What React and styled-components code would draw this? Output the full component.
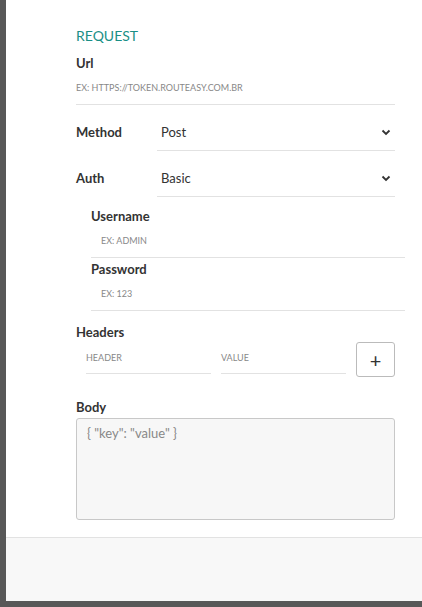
import React from 'react';
import styled, { createGlobalStyle } from 'styled-components';

const Global = createGlobalStyle`
    body { margin: 0; background: #585858; font-family: Lato, "Open Sans", sans-serif; }
`;

const Frame = styled.div`
    width: 416px;
    height: 601px;
    margin-left: 6px;
    background: white;
    display: flex;
    flex-direction: column;
`;

const Body = styled.div`
    flex: 1;
    padding: 27px 27px 0 70px;
    display: flex;
    flex-direction: column;
`;

const Footer = styled.div`
    height: 63px;
    background: #f8f8f8;
    border-top: 1px solid #e2e2e2;
`;

const Heading = styled.div`
    color: #1a8f86;
    font-size: 14px;
    margin-bottom: 11px;
`;

const Label = styled.div`
    font-size: 13px;
    font-weight: bold;
    color: #333;
    width: ${p => p.$w || 'auto'};
    flex-shrink: 0;
`;

const Input = styled.div`
    font-size: 9px;
    color: #888;
    text-transform: uppercase;
    border-bottom: 1px solid #e2e2e2;
    padding: ${p => p.$pad || '0'};
    height: ${p => p.$h || 'auto'};
    display: flex;
    align-items: center;
    flex: ${p => p.$flex || 'none'};
    margin-right: ${p => p.$mr || '0'};
`;

const Row = styled.div`
    display: flex;
    align-items: center;
    margin-top: ${p => p.$mt || '0'};
`;

const Select = styled.div`
    flex: 1;
    height: 37px;
    border-bottom: 1px solid #e2e2e2;
    display: flex;
    align-items: center;
    justify-content: space-between;
    padding: 0 4px;
    font-size: 13px;
    color: #333;
`;

const Nested = styled.div`
    margin-left: 15px;
    margin-right: -10px;
    display: flex;
    flex-direction: column;
`;

const AddButton = styled.div`
    width: 37px;
    height: 33px;
    border: 1px solid #bbb;
    border-radius: 3px;
    display: flex;
    align-items: center;
    justify-content: center;
    font-size: 20px;
    color: #333;
`;

const TextArea = styled.div`
    height: 88px;
    margin-top: 3px;
    background: #f7f7f7;
    border: 1px solid #c8c8c8;
    border-radius: 3px;
    padding: 6px 10px;
    font-size: 13px;
    color: #888;
`;

const Chevron = () => (
    <svg width="10" height="10" viewBox="0 0 10 10">
        <path d="M1.5 3.5 L5 7 L8.5 3.5" stroke="#333" strokeWidth="1.8" fill="none" />
    </svg>
);

export default function App() {
    return (
        <>
            <Global />
            <Frame>
                <Body>
                    <Heading>REQUEST</Heading>
                    <Label>Url</Label>
                    <Input $h="33px" $pad="0">EX: HTTPS://TOKEN.ROUTEASY.COM.BR</Input>
                    <Row $mt="8px">
                        <Label $w="81px">Method</Label>
                        <Select>Post<Chevron /></Select>
                    </Row>
                    <Row $mt="8px">
                        <Label $w="81px">Auth</Label>
                        <Select>Basic<Chevron /></Select>
                    </Row>
                    <Nested>
                        <Label style={{ marginTop: 11 }}>Username</Label>
                        <Input $h="33px" $pad="0 10px">EX: ADMIN</Input>
                        <Label style={{ marginTop: 3 }}>Password</Label>
                        <Input $h="33px" $pad="0 10px">EX: 123</Input>
                    </Nested>
                    <Label style={{ marginTop: 13 }}>Headers</Label>
                    <Row $mt="2px" style={{ alignItems: 'flex-start', paddingLeft: 10 }}>
                        <Input $h="31px" $flex="1" $mr="10px">HEADER</Input>
                        <Input $h="31px" $flex="1" $mr="10px">VALUE</Input>
                        <AddButton>+</AddButton>
                    </Row>
                    <Label style={{ marginTop: 22 }}>Body</Label>
                    <TextArea>{'{ "key": "value" }'}</TextArea>
                </Body>
                <Footer />
            </Frame>
        </>
    );
}
